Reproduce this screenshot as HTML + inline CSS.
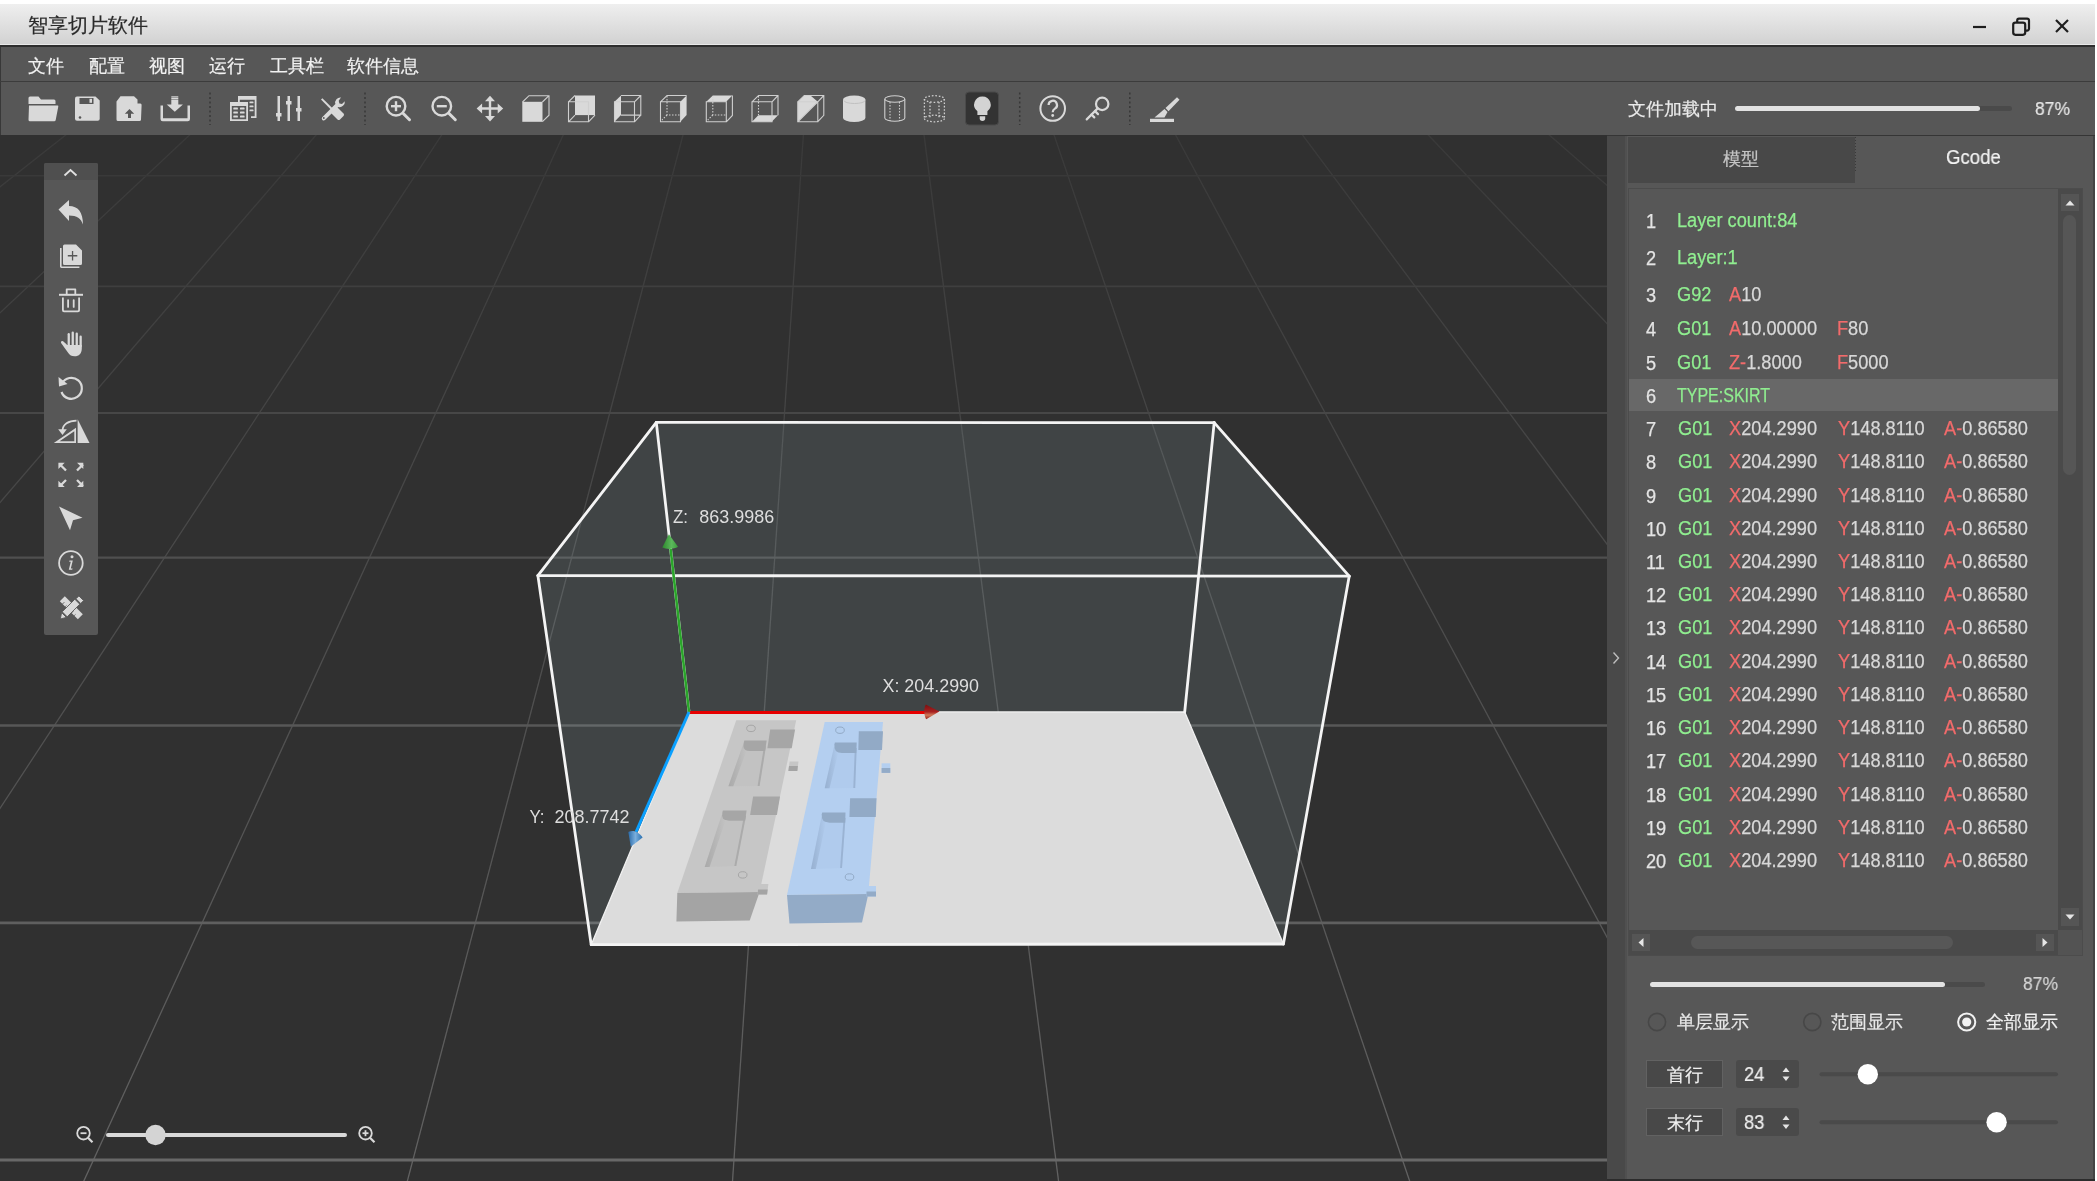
<!DOCTYPE html>
<html><head><meta charset="utf-8">
<style>
*{box-sizing:border-box}
html,body{margin:0;padding:0}
body{width:2097px;height:1181px;position:relative;overflow:hidden;background:#ffffff;font-family:"Liberation Sans",sans-serif;-webkit-text-stroke:0.2px currentColor}
.abs{position:absolute;will-change:transform}
#title{left:0;top:4px;width:2095px;height:40px;background:linear-gradient(#efefef,#d2d2d2)}
#title .t{position:absolute;left:28px;top:8px;font-size:20px;color:#2a2a2a;letter-spacing:0px}
#tline1{left:0;top:44px;width:2095px;height:1px;background:#e9e9e9}
#tline2{left:0;top:45px;width:2095px;height:2px;background:#2e2e2e}
#menu{left:0;top:47px;width:2095px;height:34px;background:#575757;border-left:1px solid #383838}
#menu span{position:absolute;top:6.8px;font-size:18px;color:#f2f2f2}
#msep{left:0;top:81px;width:2095px;height:1px;background:#3c3c3c}
#tool{left:0;top:82px;width:2095px;height:53px;background:#575757;border-left:1px solid #383838}
#vp{left:0;top:135px;width:1607px;height:1046px;background:#303030}
#strip{left:1607px;top:135px;width:20px;height:1046px;background:#494949;border-right:2px solid #505050}
#panel{left:1627px;top:135px;width:468px;height:1046px;background:#575757;border-right:2px solid #444}
.gr{position:absolute;left:0;height:24px;font-size:20px;line-height:24px;white-space:nowrap;-webkit-text-stroke:0.25px currentColor}
.gn{position:absolute;top:1px;color:#e4e4e4;transform:scaleX(0.91);transform-origin:left}
.gt{position:absolute;top:0;transform:scaleX(0.91);transform-origin:left}
.gr i{font-style:normal}
i.g{color:#90ee90}
i.r{color:#f26b6b}
i.w{color:#d8d8d8}
</style></head><body>
<div id="title" class="abs"><span class="t">智享切片软件</span></div>
<div id="tline1" class="abs"></div>
<div id="tline2" class="abs"></div>
<!-- window buttons -->
<svg class="abs" style="left:1960px;top:10px" width="120" height="34" viewBox="1960 10 120 34">
<g stroke="#1e1e1e" stroke-width="2.2" fill="none">
<line x1="1973" y1="27" x2="1986" y2="27"/>
<rect x="2013.2" y="22.6" width="12" height="12.2" rx="2.2"/>
<path d="M2017.2,22.2 v-1.8 a1.8,1.8 0 0 1 1.8,-1.8 h8.2 a1.8,1.8 0 0 1 1.8,1.8 v8.4 a1.8,1.8 0 0 1 -1.8,1.8 h-1.6"/>
<line x1="2056" y1="20" x2="2068" y2="32"/><line x1="2068" y1="20" x2="2056" y2="32"/>
</g></svg>
<div id="menu" class="abs">
<span style="left:27px">文件</span><span style="left:88px">配置</span><span style="left:148px">视图</span><span style="left:208px">运行</span><span style="left:269px">工具栏</span><span style="left:346px">软件信息</span>
</div>
<div id="msep" class="abs"></div>
<div id="tool" class="abs"></div>
<svg class="abs" style="left:0;top:82px" width="1607" height="53" viewBox="0 82 1607 53">
<g fill="#d9d9d9" stroke="none">
<!-- open folder -->
<path d="M30,96.5 h8.5 l2.5,3 h13 a1.5,1.5 0 0 1 1.5,1.5 v3 H28.5 v-6 a1.5,1.5 0 0 1 1.5,-1.5 Z"/>
<path d="M29,105.5 h28.5 a0.8,0.8 0 0 1 0.8,1 l-2.6,13.5 a1.5,1.5 0 0 1 -1.5,1.2 H30 a1.5,1.5 0 0 1 -1.5,-1.5 Z"/>
<!-- floppy -->
<path d="M77,96.5 h18.5 l4.2,4 v18.3 a2,2 0 0 1 -2,2 H77 a2,2 0 0 1 -2,-2 V98.5 a2,2 0 0 1 2,-2 Z"/>
<!-- upload doc -->
<path d="M120.5,96.2 h13.5 l3.5,3.3 v4 h2.8 a1.5,1.5 0 0 1 1.3,1.7 l-0.6,14.5 a1.5,1.5 0 0 1 -1.5,1.3 H118 a1.5,1.5 0 0 1 -1.5,-1.5 V101.5 l4,-5.3 Z"/>
<!-- download tray -->
<path d="M160.5,105.5 h2.5 v12.8 h24.5 v-12.8 h2.5 v13.5 a2.2,2.2 0 0 1 -2.2,2.2 h-25.1 a2.2,2.2 0 0 1 -2.2,-2.2 Z"/>
<path d="M171.3,99.5 h7 v5 h4.6 l-8.1,7.2 l-8.1,-7.2 h4.6 Z"/>
<rect x="171.3" y="96.3" width="7" height="1.2"/><rect x="171.3" y="97.9" width="7" height="1.1"/>
<!-- table/copy -->
<path d="M238,96 h18.5 v22 h-5.5 v-1.8 h3.7 v-16.5 h-14.9 v2.3 h-1.8 Z"/>
<rect x="249.5" y="101.5" width="4" height="1.8" rx="0.6"/><rect x="249.5" y="105.5" width="4" height="1.8" rx="0.6"/><rect x="249.5" y="109.5" width="4" height="1.8" rx="0.6"/>
<path d="M230,102 h18 v19 h-18 Z M231.8,106 v13.2 h14.4 v-13.2 Z" fill-rule="evenodd"/>
<rect x="233.3" y="107.5" width="4.6" height="2" rx="0.6"/><rect x="240" y="107.5" width="4.6" height="2" rx="0.6"/>
<rect x="233.3" y="111.5" width="4.6" height="2" rx="0.6"/><rect x="240" y="111.5" width="4.6" height="2" rx="0.6"/>
<rect x="233.3" y="115.5" width="4.6" height="2" rx="0.6"/><rect x="240" y="115.5" width="4.6" height="2" rx="0.6"/>
<!-- sliders -->
<rect x="277.5" y="96" width="2.5" height="25"/><rect x="287.5" y="96" width="2.5" height="25"/><rect x="297.5" y="96" width="2.5" height="25"/>
<rect x="276" y="113" width="5.5" height="3.5"/><rect x="286" y="101" width="5.5" height="3.5"/><rect x="296" y="108" width="5.5" height="3.5"/>
<!-- tools -->
<path d="M321,99.6 l1.4,-1.4 l11.8,11.8 l-1.4,1.4 Z"/>
<path d="M334,109 l2.5,-2.5 l7,7 a1.8,1.8 0 0 1 0,2.5 l-3.5,3.5 a1.8,1.8 0 0 1 -2.5,0 l-7,-7 Z"/>
<path d="M341,97.5 a5.2,5.2 0 0 0 -5.6,6.6 l-13.2,13.2 a2,2 0 0 0 2.8,2.8 l13.2,-13.2 a5.2,5.2 0 0 0 6.6,-5.6 l-2.8,2.8 l-2.6,-0.7 l-0.7,-2.6 Z"/>
</g>
<g fill="#575757">
<rect x="79.5" y="98" width="14" height="6"/>
<circle cx="323.8" cy="118" r="0.9"/>
<rect x="89.5" y="98.8" width="2.5" height="4" fill="#d9d9d9"/>
<circle cx="80" cy="117.5" r="1.3"/>
<path d="M128,118 v-4.3 h-3.2 l4.7,-4.7 l4.7,4.7 h-3.2 v4.3 Z"/>
</g>
<!-- separators -->
<g stroke="#383838" stroke-width="1.5" stroke-dasharray="2,2.5">
<line x1="210" y1="92.5" x2="210" y2="125"/><line x1="365" y1="92.5" x2="365" y2="125"/>
<line x1="1019.7" y1="92.5" x2="1019.7" y2="125"/><line x1="1129.8" y1="92.5" x2="1129.8" y2="125"/>
</g>
<!-- zoom in/out -->
<g stroke="#d9d9d9" fill="none">
<circle cx="396" cy="106.2" r="9.3" stroke-width="2.4"/>
<line x1="403" y1="113.2" x2="409.5" y2="119.7" stroke-width="3" stroke-linecap="round"/>
<line x1="391" y1="106.2" x2="401" y2="106.2" stroke-width="2.4"/><line x1="396" y1="101.2" x2="396" y2="111.2" stroke-width="2.4"/>
<circle cx="441.8" cy="106.2" r="9.3" stroke-width="2.4"/>
<line x1="448.8" y1="113.2" x2="455.3" y2="119.7" stroke-width="3" stroke-linecap="round"/>
<line x1="436.8" y1="106.2" x2="446.8" y2="106.2" stroke-width="2.4"/>
</g>
<!-- move -->
<g fill="#d9d9d9">
<path d="M488.8,99 h2.4 v8.3 h8.3 v2.4 h-8.3 v8.3 h-2.4 v-8.3 h-8.3 v-2.4 h8.3 Z"/>
<path d="M490,95.8 l-5,5.5 h10 Z M490,121.4 l-5,-5.5 h10 Z M476.6,108.5 l5.5,-5 v10 Z M503.2,108.5 l-5.5,-5 v10 Z"/>
</g>
<!-- cubes -->
<g stroke="#cfcfcf" stroke-width="1.1" fill="none">
<!-- 1 solid front -->
<path d="M522.5,102 l6.5,-6.3 h20 v19.5 l-6.6,6.5 M542.4,102 l6.6,-6.3"/>
<rect x="522.3" y="101.8" width="20.2" height="20" fill="#d9d9d9" stroke="none"/>
<!-- 2 back face filled -->
<rect x="575" y="95.5" width="20" height="19.6" fill="#d9d9d9" stroke="none"/>
<path d="M568.5,101.8 h20 v20 h-20 Z M568.5,101.8 l6.5,-6.3 M588.5,121.8 l6.5,-6.6 M568.5,121.8 l6.5,-6.6"/>
<!-- 3 left face filled -->
<path d="M614.5,101.8 l6.5,-6.3 v19.6 l-6.5,6.7 Z" fill="#d9d9d9" stroke="none"/>
<path d="M614.5,101.8 h20 v20 h-20 Z M621,95.5 h19.8 v19.6 h-19.8 M634.5,101.8 l6.3,-6.3 M634.5,121.8 l6.3,-6.7"/>
<!-- 4 right face filled -->
<path d="M680.3,101.8 l6.3,-6.3 v19.6 l-6.3,6.7 Z" fill="#d9d9d9" stroke="none"/>
<path d="M660.5,101.8 h20 v20 h-20 Z M660.5,101.8 l6.5,-6.3 h19.6"/>
<path d="M667,96 v19 h13 M667,115 l-5,5" stroke-dasharray="1.5,1.5"/>
<!-- 5 top face filled -->
<path d="M706.3,101.8 l6.5,-6.3 h19.6 l-6.3,6.3 Z" fill="#d9d9d9" stroke="none"/>
<path d="M706.3,101.8 h20 v20 h-20 Z M726.3,121.8 l6.1,-6.3 v-20"/>
<path d="M712.8,96 v19 h13 M712.8,115 l-5,5" stroke-dasharray="1.5,1.5"/>
<!-- 6 bottom face filled -->
<path d="M752,121.8 l6.3,-6.5 h19.7 l-6.3,6.5 Z" fill="#d9d9d9" stroke="none"/>
<path d="M752,101.8 h20 v20 h-20 Z M752,101.8 l6.5,-6.3 h19.5 v19.8 M772,101.8 l6,-6.3"/>
<path d="M758.5,96 v19" stroke-dasharray="1.5,1.5"/>
<!-- 7 diagonal -->
<path d="M797.8,101.8 L804.3,95.5 L810.5,95.5 L817.8,101.8 L797.8,121.8 Z" fill="#d9d9d9" stroke="none"/>
<path d="M797.8,101.8 h20 v20 h-20 Z M797.8,101.8 l6.5,-6.3 h19.5 v19.8 l-6,6.3 M817.8,101.8 l6,-6.3 M797.8,121.8 l20,-20"/>
</g>
<!-- solid cylinder -->
<g fill="#d9d9d9">
<path d="M843,99.5 a11.2,4 0 0 1 22.4,0 v18.5 a11.2,4 0 0 1 -22.4,0 Z"/>
</g>
<path d="M844,100.5 a10.5,3 0 0 0 21,0" stroke="#bdbdbd" stroke-width="0.9" fill="none"/>
<!-- wire cylinder -->
<g stroke="#cfcfcf" stroke-width="1.1" fill="none">
<ellipse cx="894.8" cy="99" rx="10" ry="3.3"/>
<path d="M884.8,99 v19 a10,3.3 0 0 0 20,0 v-19"/>
<path d="M890,102 v19 M899.5,102 v19" stroke-dasharray="1.5,1.5"/>
</g>
<g stroke="#cfcfcf" stroke-width="1.3" fill="none" stroke-dasharray="1.6,1.8">
<ellipse cx="934.4" cy="99" rx="10" ry="3.3"/>
<ellipse cx="934.4" cy="118.5" rx="10" ry="3.3"/>
<path d="M924.4,99 v19.5 M944.4,99 v19.5 M930,102 v16 M939,102 v16"/>
</g>
<!-- bulb button -->
<rect x="965.5" y="92" width="33" height="33" rx="3.5" fill="#333333" stroke="#4a4a4a" stroke-width="1"/>
<path d="M982.4,96.4 a8.3,8.3 0 0 1 5,14.9 v3.8 h-10 v-3.8 a8.3,8.3 0 0 1 5,-14.9 Z" fill="#d3d3d3"/>
<path d="M979.7,116.3 h5.5 v2 a2.75,2.75 0 0 1 -5.5,0 Z" fill="#d3d3d3"/>
<!-- help -->
<circle cx="1052.7" cy="108.5" r="12.3" stroke="#d9d9d9" stroke-width="2" fill="none"/>
<path d="M1048.6,105 a4.2,4.2 0 1 1 6.3,3.6 c-1.5,0.9 -2.2,1.6 -2.2,3.6" stroke="#d9d9d9" stroke-width="2.2" fill="none"/>
<circle cx="1052.7" cy="115.5" r="1.4" fill="#d9d9d9"/>
<!-- key -->
<g stroke="#d9d9d9" stroke-width="2.2" fill="none" stroke-linecap="round">
<circle cx="1102.2" cy="103.9" r="6.2"/>
<line x1="1097.7" y1="108.4" x2="1086.7" y2="119.4"/>
<line x1="1091.5" y1="114.6" x2="1094.3" y2="117.4"/>
<line x1="1095" y1="111.1" x2="1098" y2="114.1"/>
</g>
<!-- scalpel -->
<g fill="#d9d9d9">
<rect x="1150" y="118.8" width="24" height="3.2"/>
<path d="M1154.5,117.5 l10,-8.5 l3,3 l-3,5.5 Z"/>
<path d="M1165.5,108 l11.5,-10.8 l2.5,2.5 l-11,11.5 Z"/>
</g>
</svg>

<div id="vp" class="abs"></div>
<svg class="abs" style="left:0;top:135px" width="1607" height="1046" viewBox="0 135 1607 1046">
<defs>
<linearGradient id="gl" gradientUnits="userSpaceOnUse" x1="0" y1="135" x2="0" y2="1181">
<stop offset="0" stop-color="#3a3a3a"/><stop offset="1" stop-color="#626262"/>
</linearGradient>
</defs>
<g stroke="url(#gl)" stroke-width="1.3">
<line x1="68.3" y1="133" x2="-1271.0" y2="1190"/>
<line x1="191.7" y1="133" x2="-934.8" y2="1190"/>
<line x1="317.8" y1="133" x2="-591.3" y2="1190"/>
<line x1="443.0" y1="133" x2="-250.3" y2="1190"/>
<line x1="564.1" y1="133" x2="79.7" y2="1190"/>
<line x1="683.5" y1="133" x2="405.0" y2="1190"/>
<line x1="803.5" y1="133" x2="731.9" y2="1190"/>
<line x1="923.8" y1="133" x2="1059.7" y2="1190"/>
<line x1="1053.4" y1="133" x2="1412.7" y2="1190"/>
<line x1="1174.6" y1="133" x2="1742.9" y2="1190"/>
<line x1="1301.1" y1="133" x2="2087.5" y2="1190"/>
<line x1="1426.4" y1="133" x2="2428.8" y2="1190"/>
<line x1="1547.0" y1="133" x2="2757.4" y2="1190"/>
<line x1="1671.0" y1="133" x2="3095.2" y2="1190"/>
</g>
<g>
<line x1="0" y1="175.8" x2="1607" y2="175.8" stroke="#393939" stroke-width="1.5"/>
<line x1="0" y1="286.3" x2="1607" y2="286.3" stroke="#3f3f3f" stroke-width="1.8"/>
<line x1="0" y1="413" x2="1607" y2="413" stroke="#474747" stroke-width="2.1"/>
<line x1="0" y1="557.6" x2="1607" y2="557.6" stroke="#4f4f4f" stroke-width="2.3"/>
<line x1="0" y1="725.5" x2="1607" y2="725.5" stroke="#575757" stroke-width="2.5"/>
<line x1="0" y1="922.9" x2="1607" y2="922.9" stroke="#5f5f5f" stroke-width="2.7"/>
<line x1="0" y1="1160.1" x2="1607" y2="1160.1" stroke="#686868" stroke-width="3.0"/>
</g>
<polygon points="656.3,422.4 1214.2,422.6 1349.2,576.2 1283.4,944.0 591.2,944.7 537.9,575.6" fill="rgb(200,236,245)" fill-opacity="0.11"/>
<polygon points="689.0,711.8 1184.7,712.0 1283.4,944.0 591.2,944.7" fill="#dcdcdc"/>
<defs><linearGradient id="gb" x1="0" x2="1" y1="0" y2="0"><stop offset="0" stop-color="#97b0d0"/><stop offset="1" stop-color="#b0cbed"/></linearGradient><linearGradient id="gg" x1="0" x2="1" y1="0" y2="0"><stop offset="0" stop-color="#a9a9a9"/><stop offset="1" stop-color="#c2c2c2"/></linearGradient></defs><polygon points="736.2,720.3 796.2,720.3 759.6,892.0 677.3,893.0" fill="#c6c6c6"/>
<polygon points="677.3,893.0 759.6,892.0 749.7,920.4 676.4,921.5" fill="#a4a4a4"/>
<polygon points="789.6,761.4 798.5,761.4 797.3,771.0 788.4,771.0" fill="#c6c6c6"/>
<polygon points="789.0,766.1 797.9,766.1 797.3,771.0 788.4,771.0" fill="#a4a4a4"/>
<polygon points="758.8,883.9 768.4,883.9 767.1,894.4 757.5,894.4" fill="#c6c6c6"/>
<polygon points="758.1,889.4 767.7,889.4 767.1,894.4 757.5,894.4" fill="#a4a4a4"/>
<polygon points="770.2,729.5 795.1,729.5 791.7,748.2 767.4,748.2" fill="#a6a6a6"/>
<polygon points="753.1,796.4 780.0,796.4 776.9,815.1 750.1,815.1" fill="#a6a6a6"/>
<polygon points="741.1,751.1 765.0,751.1 759.6,786.1 728.4,786.3" fill="#c2c2c2"/>
<polygon points="742.8,745.2 746.8,750.1 733.3,786.3 728.4,786.3" fill="url(#gg)"/>
<polygon points="764.0,746.2 766.0,746.2 759.6,786.1 757.6,786.1" fill="#ababab"/>
<path d="M744.3,740.6 L766.7,740.6 L765.0,751.1 L750.1,751.1 Q741.6,751.1 743.8,742.6 Z" fill="#a6a6a6"/>
<polygon points="720.0,820.7 745.1,820.7 736.3,865.9 704.7,866.9" fill="#c2c2c2"/>
<polygon points="721.7,815.0 725.7,820.0 709.6,866.9 704.7,866.9" fill="url(#gg)"/>
<polygon points="744.0,816.0 746.0,816.0 736.3,865.9 734.3,865.9" fill="#ababab"/>
<path d="M722.9,810.6 L746.6,810.6 L745.1,820.7 L729.0,820.7 Q720.5,820.7 722.4,812.6 Z" fill="#a6a6a6"/>
<ellipse cx="751.0" cy="728.4" rx="4.3" ry="3.2" fill="none" stroke="#a6a6a6" stroke-width="1"/>
<ellipse cx="742.7" cy="874.9" rx="4.3" ry="3.2" fill="none" stroke="#a6a6a6" stroke-width="1"/>
<polygon points="824.7,722.1 883.0,722.1 868.3,894.1 787.0,895.1" fill="#b4cff0"/>
<polygon points="787.0,895.1 868.3,894.1 862.0,922.5 789.5,923.6" fill="#93abc7"/>
<polygon points="881.6,763.3 890.3,763.3 890.3,772.9 881.6,772.9" fill="#b4cff0"/>
<polygon points="881.6,768.0 890.3,768.0 890.3,772.9 881.6,772.9" fill="#93abc7"/>
<polygon points="866.5,886.0 876.0,886.0 876.0,896.5 866.5,896.5" fill="#b4cff0"/>
<polygon points="866.5,891.5 876.0,891.5 876.0,896.5 866.5,896.5" fill="#93abc7"/>
<polygon points="858.8,731.3 883.0,731.3 882.0,750.0 858.3,750.0" fill="#92aac6"/>
<polygon points="850.1,798.3 876.5,798.3 875.8,817.1 849.4,817.1" fill="#92aac6"/>
<polygon points="833.0,753.0 856.3,753.0 855.2,788.0 824.7,788.2" fill="#b0cbed"/>
<polygon points="834.0,747.0 838.5,752.0 829.5,788.2 824.7,788.2" fill="url(#gb)"/>
<polygon points="854.8,748.0 856.7,748.0 855.2,788.0 853.3,788.0" fill="#9ab3d3"/>
<path d="M834.9,742.4 L856.7,742.4 L856.3,753.0 L842.0,753.0 Q833.5,753.0 834.4,744.4 Z" fill="#92aac6"/>
<polygon points="820.5,822.7 845.2,822.7 842.0,868.0 811.0,869.0" fill="#b0cbed"/>
<polygon points="821.5,817.0 826.0,822.0 815.8,869.0 811.0,869.0" fill="url(#gb)"/>
<polygon points="843.6,818.0 845.5,818.0 842.0,868.0 840.1,868.0" fill="#9ab3d3"/>
<path d="M822.2,812.6 L845.5,812.6 L845.2,822.7 L829.5,822.7 Q821.0,822.7 821.7,814.6 Z" fill="#92aac6"/>
<ellipse cx="840.0" cy="730.2" rx="4.3" ry="3.2" fill="none" stroke="#92aac6" stroke-width="1"/>
<ellipse cx="849.5" cy="877.0" rx="4.3" ry="3.2" fill="none" stroke="#92aac6" stroke-width="1"/>
<g stroke="#f2f2f2" stroke-width="1.3">
<line x1="689" y1="711.8" x2="1184.7" y2="712"/>
<line x1="689" y1="711.8" x2="591.2" y2="944.7"/>
<line x1="1184.7" y1="712" x2="1283.4" y2="944"/>
</g>
<g stroke="#f4f4f4" stroke-width="2.8" stroke-linecap="round">
<line x1="656.3" y1="422.4" x2="1214.2" y2="422.6"/>
<line x1="537.9" y1="575.6" x2="1349.2" y2="576.2"/>
<line x1="537.9" y1="575.6" x2="656.3" y2="422.4"/>
<line x1="1349.2" y1="576.2" x2="1214.2" y2="422.6"/>
<line x1="656.3" y1="422.4" x2="689" y2="711.8"/>
<line x1="1214.2" y1="422.6" x2="1184.7" y2="712"/>
<line x1="537.9" y1="575.6" x2="591.2" y2="944.7"/>
<line x1="1349.2" y1="576.2" x2="1283.4" y2="944"/>
<line x1="591.2" y1="944.7" x2="1283.4" y2="944"/>
</g>
<defs>
<linearGradient id="cr" x1="0" y1="0" x2="0" y2="1"><stop offset="0" stop-color="#7a1010"/><stop offset="0.5" stop-color="#a82020"/><stop offset="0.72" stop-color="#d07a5a"/><stop offset="1" stop-color="#9a2018"/></linearGradient>
<linearGradient id="cg" x1="0" y1="0" x2="1" y2="0"><stop offset="0" stop-color="#2e8a2e"/><stop offset="0.6" stop-color="#5cb85c"/><stop offset="1" stop-color="#3a9a3a"/></linearGradient>
<linearGradient id="cb" x1="0" y1="0" x2="1" y2="0"><stop offset="0" stop-color="#2a6aa8"/><stop offset="0.5" stop-color="#7aaedc"/><stop offset="1" stop-color="#2a70b0"/></linearGradient>
</defs>
<line x1="689.5" y1="712.6" x2="927" y2="712.6" stroke="#e60000" stroke-width="3"/>
<path d="M939.4,711.6 L925.8,704.4 C923.5,709 923.8,715 926.2,719.2 Z" fill="url(#cr)"/>
<line x1="689" y1="711.8" x2="670.6" y2="549" stroke="#2aa52a" stroke-width="2.6"/>
<path d="M668.9,534.3 L662.3,547.5 C666,549.5 674,549.5 678,546.8 Z" fill="url(#cg)"/>
<line x1="689" y1="712" x2="636" y2="832" stroke="#0aa0ff" stroke-width="3"/>
<path d="M630.8,846.7 L628.3,832 C633,829.5 639,832 642.6,837.5 Z" fill="url(#cb)"/>
<g font-family="Liberation Sans, sans-serif" font-size="19" fill="#dedede">
<text x="673" y="523.2" textLength="15" lengthAdjust="spacingAndGlyphs">Z:</text><text x="699.2" y="523.2" textLength="75" lengthAdjust="spacingAndGlyphs">863.9986</text>
<text x="882.5" y="692.4" textLength="96.5" lengthAdjust="spacingAndGlyphs">X: 204.2990</text>
<text x="529.5" y="823" textLength="15" lengthAdjust="spacingAndGlyphs">Y:</text><text x="554.5" y="823" textLength="75" lengthAdjust="spacingAndGlyphs">208.7742</text>
</g>

</svg>
<div class="abs" style="left:44px;top:163px;width:54px;height:472px;background:#575757;border-radius:2px"></div>
<div class="abs" style="left:44px;top:163px;width:54px;height:17px;background:#4f4f4f;border-radius:2px 2px 0 0"></div>
<svg class="abs" style="left:40px;top:160px" width="60" height="480" viewBox="40 160 60 480">
<path d="M64.5,175.5 l6,-5.5 l6,5.5" stroke="#e0e0e0" stroke-width="1.8" fill="none"/>
<g fill="#d9d9d9">
<!-- undo -->
<path d="M58.5,209.5 l10.5,-9.5 v6 c9,0 14,6 14,18.6 c-2,-6 -6,-9 -14,-9 v5.5 Z"/>
<!-- copy add -->
<path d="M64.5,244.6 h11.5 l6,6 v12.8 a1.5,1.5 0 0 1 -1.5,1.5 H64.5 a1.5,1.5 0 0 1 -1.5,-1.5 V246.1 a1.5,1.5 0 0 1 1.5,-1.5 Z"/>
<path d="M60,248 h1.6 v18.4 h17.8 v1.6 h-18 a1.4,1.4 0 0 1 -1.4,-1.4 Z"/>
<path d="M71.9,251 h1.3 v4.1 h4.1 v1.3 h-4.1 v4.1 h-1.3 v-4.1 h-4.1 v-1.3 h4.1 Z" fill="#575757"/>
<!-- trash -->
<rect x="59" y="293.8" width="24" height="2"/>
<path d="M65.8,294 v-4.8 a0.8,0.8 0 0 1 0.8,-0.8 h8.8 a0.8,0.8 0 0 1 0.8,0.8 v4.8 h-1.8 v-3.8 h-6.8 v3.8 Z"/>
<path d="M62,297.5 h1.8 v12.3 a0.6,0.6 0 0 0 0.6,0.6 h13.2 a0.6,0.6 0 0 0 0.6,-0.6 v-12.3 h1.8 v12.8 a2,2 0 0 1 -2,2 h-14 a2,2 0 0 1 -2,-2 Z"/>
<rect x="67.2" y="299.2" width="1.8" height="8.6" rx="0.9"/><rect x="72.8" y="299.2" width="1.8" height="8.6" rx="0.9"/>
<!-- hand -->
<rect x="67.6" y="333" width="2.3" height="15" rx="1.15"/>
<rect x="71.6" y="331.5" width="2.3" height="16" rx="1.15"/>
<rect x="75.6" y="332.5" width="2.3" height="15" rx="1.15"/>
<rect x="79.5" y="335.5" width="2.3" height="12" rx="1.15"/>
<path d="M66.8,345 h15 v3.5 c0,5 -2.8,7.8 -7.2,7.8 c-3,0 -5,-1.3 -6.5,-3.6 l-7,-9.8 a1.3,1.3 0 0 1 2,-1.6 l3.7,3.2 Z"/>
</g>
<g stroke="#d9d9d9" fill="none">
<!-- rotate -->
<path d="M62,383.5 A10.5,10.5 0 1 1 61.5,392" stroke-width="2.2"/>
</g>
<g fill="#d9d9d9">
<path d="M58.5,377 l0.5,9.5 l8.5,-2.5 Z"/>
<!-- mirror -->
<path d="M77.6,419.3 L89.5,443 L77.6,443 Z"/>
<path d="M53.8,443 L76,427.8 L76,443 Z M59.6,441.3 L74.3,441.3 L74.3,431.2 Z" fill-rule="evenodd"/>
</g>
<path d="M76.5,420.6 C68.5,420.6 62.6,424.5 62.6,430.5" stroke="#d9d9d9" stroke-width="1.8" fill="none"/>
<path d="M58.2,429.3 h8.6 l-4.3,5.8 Z" fill="#d9d9d9"/>
<g stroke="#d9d9d9" stroke-width="2.3" fill="none">
<!-- scale arrows -->
<path d="M60,464.5 l6,6 M77,470.5 l6,-6 M60,486 l6,-6 M83,486 l-6,-6"/>
</g>
<g fill="#d9d9d9">
<path d="M58.4,462.8 h6.3 l-6.3,6.3 Z M83.3,462.8 h-6.3 l6.3,6.3 Z M58.4,487 h6.3 l-6.3,-6.3 Z M83.3,487 h-6.3 l6.3,-6.3 Z"/>
<!-- pointer -->
<path d="M59,506.5 l23.5,11.2 l-9.5,2.5 l-3,10 Z"/>
</g>
<!-- info -->
<circle cx="70.9" cy="563" r="11.8" stroke="#d9d9d9" stroke-width="1.8" fill="none"/>
<g fill="#d9d9d9">
<circle cx="72" cy="556.8" r="1.5"/>
<path d="M69.5,560.5 h3.3 l-2,8 h1.8 l-0.4,1.2 h-3.4 l2,-8 h-1.6 Z"/>
<!-- ruler pencil cross -->
<path d="M59.8,601.3 L64.8,596.3 L82.8,614.3 L77.8,619.3 Z"/>
</g>
<g stroke="#575757" stroke-width="0.9">
<line x1="62.5" y1="604" x2="64.3" y2="602.2"/><line x1="65.2" y1="606.7" x2="66.5" y2="605.4"/><line x1="71.5" y1="613" x2="73.3" y2="611.2"/><line x1="74.2" y1="615.7" x2="75.5" y2="614.4"/>
</g>
<path d="M62.2,611.8 L74.8,599.2 L79.8,604.2 L67.2,616.8 Z M61.6,612.6 L66.4,617.4 L60.3,619 Z M76,598.8 L78.9,595.9 L83.6,600.6 L80.7,603.5 Z" fill="#d9d9d9" stroke="#575757" stroke-width="0.9"/>
</svg>
<!-- zoom slider -->
<svg class="abs" style="left:70px;top:1115px" width="310" height="40" viewBox="70 1115 310 40">
<g stroke="#d9d9d9" fill="none">
<circle cx="83.5" cy="1133.2" r="6.3" stroke-width="1.8"/>
<line x1="88" y1="1137.7" x2="92.5" y2="1142.2" stroke-width="2.2"/>
<line x1="80.5" y1="1133.2" x2="86.5" y2="1133.2" stroke-width="1.8"/>
<circle cx="365.5" cy="1133.2" r="6.3" stroke-width="1.8"/>
<line x1="370" y1="1137.7" x2="374.5" y2="1142.2" stroke-width="2.2"/>
<line x1="362.5" y1="1133.2" x2="368.5" y2="1133.2" stroke-width="1.8"/><line x1="365.5" y1="1130.2" x2="365.5" y2="1136.2" stroke-width="1.8"/>
<line x1="108" y1="1135" x2="345" y2="1135" stroke-width="4" stroke-linecap="round"/>
</g>
<circle cx="155.5" cy="1135" r="10.2" fill="#d4d4d4"/>
</svg>

<div id="strip" class="abs"></div>
<div id="panel" class="abs"></div>
<div class="abs" style="left:1607px;top:135px;width:488px;height:1px;background:#353535"></div>
<div class="abs" style="left:1607px;top:1179px;width:488px;height:2px;background:#2c2c2c"></div>
<!-- tabs -->
<div class="abs" style="left:1628px;top:137px;width:227px;height:46px;background:#484848"></div>
<div class="abs" style="left:1723px;top:147px;font-size:18px;color:#c4c4c4">模型</div>
<div class="abs" style="left:1946px;top:146px;font-size:20px;color:#f4f4f4;transform:scaleX(0.93);transform-origin:left">Gcode</div>
<svg class="abs" style="left:1854px;top:137px" width="3" height="40"><line x1="1.5" y1="0" x2="1.5" y2="36" stroke="#3a3a3a" stroke-width="1" stroke-dasharray="1,2"/></svg>
<!-- list box -->
<div class="abs" style="left:1628px;top:188px;width:455px;height:768px;border:1px solid #4c4c4c;background:#575757"></div>
<div class="abs" style="left:1629px;top:379px;width:429px;height:32px;background:#686868"></div>
<!-- vertical scrollbar -->
<div class="abs" style="left:2058px;top:189px;width:24px;height:741px;background:#4a4a4a"></div>
<div class="abs" style="left:2061px;top:194px;width:18px;height:17px;background:#555555"></div>
<svg class="abs" style="left:2061px;top:194px" width="18" height="17"><path d="M4.5,11.5 h9 l-4.5,-5 Z" fill="#e6e6e6"/></svg>
<div class="abs" style="left:2063px;top:215px;width:13px;height:260px;background:#565656;border-radius:6.5px"></div>
<div class="abs" style="left:2061px;top:908px;width:18px;height:18px;background:#555555"></div>
<svg class="abs" style="left:2061px;top:908px" width="18" height="18"><path d="M4.5,6.5 h9 l-4.5,5 Z" fill="#e6e6e6"/></svg>
<!-- horizontal scrollbar -->
<div class="abs" style="left:1629px;top:930px;width:429px;height:25px;background:#4a4a4a"></div>
<div class="abs" style="left:2058px;top:930px;width:24px;height:25px;background:#535353"></div>
<div class="abs" style="left:1632px;top:934px;width:18px;height:17px;background:#555555"></div>
<svg class="abs" style="left:1632px;top:934px" width="18" height="17"><path d="M11.5,4 v9 l-5,-4.5 Z" fill="#e6e6e6"/></svg>
<div class="abs" style="left:2036px;top:934px;width:18px;height:17px;background:#555555"></div>
<svg class="abs" style="left:2036px;top:934px" width="18" height="17"><path d="M6.5,4 v9 l5,-4.5 Z" fill="#e6e6e6"/></svg>
<div class="abs" style="left:1691px;top:936px;width:262px;height:13px;background:#575757;border-radius:6.5px"></div>
<!-- progress slider -->
<div class="abs" style="left:1650px;top:981.5px;width:335px;height:5px;background:#4a4a4a;border-radius:2.5px"></div>
<div class="abs" style="left:1650px;top:981.5px;width:295px;height:5px;background:#e2e2e2;border-radius:2.5px"></div>
<div class="abs" style="left:2022.5px;top:973px;font-size:19px;color:#d6d6d6;transform:scaleX(0.92);transform-origin:left">87%</div>
<!-- radios -->
<svg class="abs" style="left:1640px;top:1005px" width="440" height="34" viewBox="1640 1005 440 34">
<circle cx="1657" cy="1022" r="8.6" stroke="#474747" stroke-width="1.6" fill="none"/>
<circle cx="1812.3" cy="1022" r="8.6" stroke="#474747" stroke-width="1.6" fill="none"/>
<circle cx="1966.7" cy="1022" r="8.6" stroke="#f2f2f2" stroke-width="2" fill="none"/>
<circle cx="1966.7" cy="1022" r="4.6" fill="#f2f2f2"/>
</svg>
<div class="abs" style="left:1677px;top:1010px;font-size:18px;color:#e8e8e8">单层显示</div>
<div class="abs" style="left:1831px;top:1010px;font-size:18px;color:#e8e8e8">范围显示</div>
<div class="abs" style="left:1986px;top:1010px;font-size:18px;color:#f2f2f2">全部显示</div>
<!-- rows -->
<div class="abs" style="left:1646px;top:1060px;width:77px;height:28px;background:#484848;border:1px solid #626262"></div>
<div class="abs" style="left:1667px;top:1063px;font-size:18px;color:#f0f0f0">首行</div>
<div class="abs" style="left:1736px;top:1060px;width:63px;height:28px;background:#4a4a4a;border-radius:3px"></div>
<div class="abs" style="left:1744px;top:1063px;font-size:20px;color:#eeeeee;transform:scaleX(0.92);transform-origin:left">24</div>
<div class="abs" style="left:1646px;top:1108px;width:77px;height:28px;background:#484848;border:1px solid #626262"></div>
<div class="abs" style="left:1667px;top:1111px;font-size:18px;color:#f0f0f0">末行</div>
<div class="abs" style="left:1736px;top:1108px;width:63px;height:28px;background:#4a4a4a;border-radius:3px"></div>
<div class="abs" style="left:1744px;top:1111px;font-size:20px;color:#eeeeee;transform:scaleX(0.92);transform-origin:left">83</div>
<svg class="abs" style="left:1770px;top:1055px" width="300" height="90" viewBox="1770 1055 300 90">
<path d="M1782.5,1072 l3.5,-4.5 l3.5,4.5 Z M1782.5,1076.5 l3.5,4.5 l3.5,-4.5 Z" fill="#e4e4e4"/>
<path d="M1782.5,1120 l3.5,-4.5 l3.5,4.5 Z M1782.5,1124.5 l3.5,4.5 l3.5,-4.5 Z" fill="#e4e4e4"/>
<line x1="1821.5" y1="1074.2" x2="2056" y2="1074.2" stroke="#4a4a4a" stroke-width="4" stroke-linecap="round"/>
<line x1="1821.5" y1="1122.2" x2="2056" y2="1122.2" stroke="#4a4a4a" stroke-width="4" stroke-linecap="round"/>
<circle cx="1867.8" cy="1074.2" r="10.2" fill="#ffffff"/>
<circle cx="1996.6" cy="1122.2" r="10.2" fill="#ffffff"/>
</svg>
<!-- top-right loading -->
<div class="abs" style="left:1628px;top:97px;font-size:18px;color:#eaeaea">文件加载中</div>
<div class="abs" style="left:1735px;top:106px;width:277px;height:5px;background:#4a4a4a;border-radius:2.5px"></div>
<div class="abs" style="left:1735px;top:106px;width:245px;height:5px;background:#e2e2e2;border-radius:2.5px"></div>
<div class="abs" style="left:2035.2px;top:98px;font-size:19px;color:#e6e6e6;transform:scaleX(0.92);transform-origin:left">87%</div>
<!-- collapse arrow -->
<svg class="abs" style="left:1608px;top:648px" width="16" height="20" viewBox="1608 648 16 20">
<path d="M1613.5,652.5 l5,5.5 l-5,5.5" stroke="#bdbdbd" stroke-width="1.4" fill="none"/>
</svg>

<div class="abs" style="left:0;top:0;width:2097px;height:1181px">
<div class="gr" style="top:208.0px"><span class="gn" style="left:1646px">1</span>
<span class="gt" style="left:1677px"><i class="g">Layer count:84</i></span></div>
<div class="gr" style="top:245.0px"><span class="gn" style="left:1646px">2</span>
<span class="gt" style="left:1677px"><i class="g">Layer:1</i></span></div>
<div class="gr" style="top:282.0px"><span class="gn" style="left:1646px">3</span>
<span class="gt" style="left:1677px"><i class="g">G92</i></span><span class="gt" style="left:1729px"><i class="r">A</i><i class="w">10</i></span></div>
<div class="gr" style="top:316.0px"><span class="gn" style="left:1646px">4</span>
<span class="gt" style="left:1677px"><i class="g">G01</i></span><span class="gt" style="left:1729px"><i class="r">A</i><i class="w">10.00000</i></span><span class="gt" style="left:1837px"><i class="r">F</i><i class="w">80</i></span></div>
<div class="gr" style="top:350.0px"><span class="gn" style="left:1646px">5</span>
<span class="gt" style="left:1677px"><i class="g">G01</i></span><span class="gt" style="left:1729px"><i class="r">Z-</i><i class="w">1.8000</i></span><span class="gt" style="left:1837px"><i class="r">F</i><i class="w">5000</i></span></div>
<div class="gr" style="top:383.0px"><span class="gn" style="left:1646px">6</span>
<span class="gt" style="left:1677px;transform:scaleX(0.8)"><i class="g">TYPE:SKIRT</i></span></div>
<div class="gr" style="top:416.0px"><span class="gn" style="left:1646px">7</span>
<span class="gt" style="left:1678px"><i class="g">G01</i></span><span class="gt" style="left:1729px"><i class="r">X</i><i class="w">204.2990</i></span><span class="gt" style="left:1838px"><i class="r">Y</i><i class="w">148.8110</i></span><span class="gt" style="left:1944px"><i class="r">A-</i><i class="w">0.86580</i></span></div>
<div class="gr" style="top:449.2px"><span class="gn" style="left:1646px">8</span>
<span class="gt" style="left:1678px"><i class="g">G01</i></span><span class="gt" style="left:1729px"><i class="r">X</i><i class="w">204.2990</i></span><span class="gt" style="left:1838px"><i class="r">Y</i><i class="w">148.8110</i></span><span class="gt" style="left:1944px"><i class="r">A-</i><i class="w">0.86580</i></span></div>
<div class="gr" style="top:482.5px"><span class="gn" style="left:1646px">9</span>
<span class="gt" style="left:1678px"><i class="g">G01</i></span><span class="gt" style="left:1729px"><i class="r">X</i><i class="w">204.2990</i></span><span class="gt" style="left:1838px"><i class="r">Y</i><i class="w">148.8110</i></span><span class="gt" style="left:1944px"><i class="r">A-</i><i class="w">0.86580</i></span></div>
<div class="gr" style="top:515.7px"><span class="gn" style="left:1645.7px">10</span>
<span class="gt" style="left:1678px"><i class="g">G01</i></span><span class="gt" style="left:1729px"><i class="r">X</i><i class="w">204.2990</i></span><span class="gt" style="left:1838px"><i class="r">Y</i><i class="w">148.8110</i></span><span class="gt" style="left:1944px"><i class="r">A-</i><i class="w">0.86580</i></span></div>
<div class="gr" style="top:548.9px"><span class="gn" style="left:1645.7px">11</span>
<span class="gt" style="left:1678px"><i class="g">G01</i></span><span class="gt" style="left:1729px"><i class="r">X</i><i class="w">204.2990</i></span><span class="gt" style="left:1838px"><i class="r">Y</i><i class="w">148.8110</i></span><span class="gt" style="left:1944px"><i class="r">A-</i><i class="w">0.86580</i></span></div>
<div class="gr" style="top:582.2px"><span class="gn" style="left:1645.7px">12</span>
<span class="gt" style="left:1678px"><i class="g">G01</i></span><span class="gt" style="left:1729px"><i class="r">X</i><i class="w">204.2990</i></span><span class="gt" style="left:1838px"><i class="r">Y</i><i class="w">148.8110</i></span><span class="gt" style="left:1944px"><i class="r">A-</i><i class="w">0.86580</i></span></div>
<div class="gr" style="top:615.4px"><span class="gn" style="left:1645.7px">13</span>
<span class="gt" style="left:1678px"><i class="g">G01</i></span><span class="gt" style="left:1729px"><i class="r">X</i><i class="w">204.2990</i></span><span class="gt" style="left:1838px"><i class="r">Y</i><i class="w">148.8110</i></span><span class="gt" style="left:1944px"><i class="r">A-</i><i class="w">0.86580</i></span></div>
<div class="gr" style="top:648.6px"><span class="gn" style="left:1645.7px">14</span>
<span class="gt" style="left:1678px"><i class="g">G01</i></span><span class="gt" style="left:1729px"><i class="r">X</i><i class="w">204.2990</i></span><span class="gt" style="left:1838px"><i class="r">Y</i><i class="w">148.8110</i></span><span class="gt" style="left:1944px"><i class="r">A-</i><i class="w">0.86580</i></span></div>
<div class="gr" style="top:681.8px"><span class="gn" style="left:1645.7px">15</span>
<span class="gt" style="left:1678px"><i class="g">G01</i></span><span class="gt" style="left:1729px"><i class="r">X</i><i class="w">204.2990</i></span><span class="gt" style="left:1838px"><i class="r">Y</i><i class="w">148.8110</i></span><span class="gt" style="left:1944px"><i class="r">A-</i><i class="w">0.86580</i></span></div>
<div class="gr" style="top:715.1px"><span class="gn" style="left:1645.7px">16</span>
<span class="gt" style="left:1678px"><i class="g">G01</i></span><span class="gt" style="left:1729px"><i class="r">X</i><i class="w">204.2990</i></span><span class="gt" style="left:1838px"><i class="r">Y</i><i class="w">148.8110</i></span><span class="gt" style="left:1944px"><i class="r">A-</i><i class="w">0.86580</i></span></div>
<div class="gr" style="top:748.3px"><span class="gn" style="left:1645.7px">17</span>
<span class="gt" style="left:1678px"><i class="g">G01</i></span><span class="gt" style="left:1729px"><i class="r">X</i><i class="w">204.2990</i></span><span class="gt" style="left:1838px"><i class="r">Y</i><i class="w">148.8110</i></span><span class="gt" style="left:1944px"><i class="r">A-</i><i class="w">0.86580</i></span></div>
<div class="gr" style="top:781.5px"><span class="gn" style="left:1645.7px">18</span>
<span class="gt" style="left:1678px"><i class="g">G01</i></span><span class="gt" style="left:1729px"><i class="r">X</i><i class="w">204.2990</i></span><span class="gt" style="left:1838px"><i class="r">Y</i><i class="w">148.8110</i></span><span class="gt" style="left:1944px"><i class="r">A-</i><i class="w">0.86580</i></span></div>
<div class="gr" style="top:814.8px"><span class="gn" style="left:1645.7px">19</span>
<span class="gt" style="left:1678px"><i class="g">G01</i></span><span class="gt" style="left:1729px"><i class="r">X</i><i class="w">204.2990</i></span><span class="gt" style="left:1838px"><i class="r">Y</i><i class="w">148.8110</i></span><span class="gt" style="left:1944px"><i class="r">A-</i><i class="w">0.86580</i></span></div>
<div class="gr" style="top:848.0px"><span class="gn" style="left:1645.7px">20</span>
<span class="gt" style="left:1678px"><i class="g">G01</i></span><span class="gt" style="left:1729px"><i class="r">X</i><i class="w">204.2990</i></span><span class="gt" style="left:1838px"><i class="r">Y</i><i class="w">148.8110</i></span><span class="gt" style="left:1944px"><i class="r">A-</i><i class="w">0.86580</i></span></div>
</div>
</body></html>
